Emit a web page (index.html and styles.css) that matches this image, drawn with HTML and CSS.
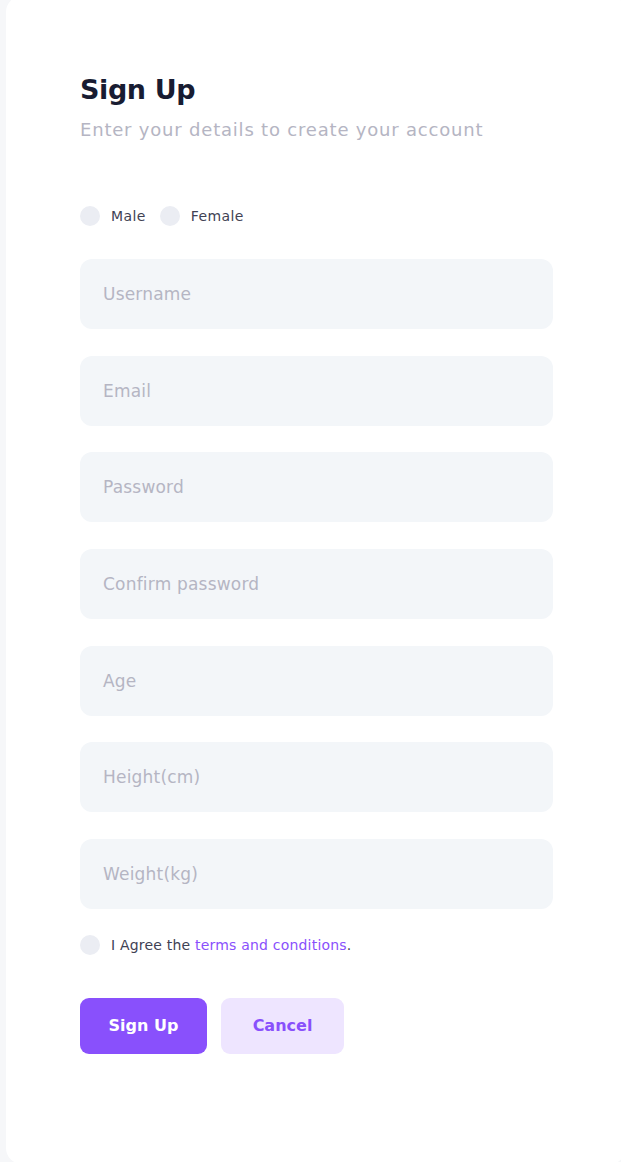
FILE: index.html
```html
<!DOCTYPE html>
<html lang="en">
<head>
<meta charset="utf-8">
<title>Sign Up</title>
<link rel="stylesheet" href="styles.css">
</head>
<body>
<main class="card">
  <form class="form">
    <header class="head">
      <h1 class="title">Sign Up</h1>
      <p class="subtitle">Enter your details to create your account</p>
    </header>
    <div class="radios">
      <label class="radio"><span class="dot"></span>Male</label>
      <label class="radio"><span class="dot"></span>Female</label>
    </div>
    <div class="fields">
      <div class="field">Username</div>
      <div class="field">Email</div>
      <div class="field">Password</div>
      <div class="field">Confirm password</div>
      <div class="field">Age</div>
      <div class="field">Height(cm)</div>
      <div class="field">Weight(kg)</div>
    </div>
    <label class="agree"><span class="dot"></span>I Agree the&nbsp;<a class="link" href="#">terms and conditions</a>.</label>
    <div class="actions">
      <button type="button" class="btn btn-primary">Sign Up</button>
      <button type="button" class="btn btn-light">Cancel</button>
    </div>
  </form>
</main>
</body>
</html>
```

FILE: styles.css
```css
* { box-sizing: border-box; }
html, body { margin: 0; padding: 0; }
body {
  background: #f6f7f9;
  font-family: "DejaVu Sans", "Open Sans", sans-serif;
  height: 1162px;
  overflow: hidden;
}
.card {
  background: #ffffff;
  margin: -4px 0 0 6px;
  width: 620px;
  height: 1168px;
  border-radius: 16px;
  padding: 0 0 0 74px;
}
.form { width: 473px; padding-top: 76px; }
.title {
  margin: 0;
  font-size: 27px;
  line-height: 36px;
  font-weight: 600;
  letter-spacing: -0.4px;
  color: #181c32;
}
.subtitle {
  margin: 10px 0 0;
  font-size: 18px;
  line-height: 24px;
  font-weight: 400;
  letter-spacing: 0.8px;
  color: #b5b5c3;
}
.radios {
  display: flex;
  gap: 14px;
  margin-top: 62px;
  height: 24px;
  align-items: center;
}
.radio, .agree {
  display: flex;
  align-items: center;
  font-size: 14px;
  letter-spacing: 0.4px;
  color: #3f4254;
}
.dot {
  width: 20px;
  height: 20px;
  border-radius: 50%;
  background: #ebedf3;
  margin-right: 11px;
  flex: none;
}
.fields {
  display: flex;
  flex-direction: column;
  gap: 26.67px;
  margin-top: 31px;
}
.field {
  height: 70px;
  border-radius: 12px;
  background: #f3f6f9;
  padding: 0 23px;
  display: flex;
  align-items: center;
  font-size: 17px;
  letter-spacing: 0.2px;
  color: #b5b5c3;
}
.agree { margin-top: 25px; height: 22px; letter-spacing: 0.2px; }
.link { color: #8950fc; text-decoration: none; }
.actions { display: flex; gap: 14px; margin-top: 42px; }
.btn {
  border: 0;
  height: 56px;
  border-radius: 9px;
  font-family: inherit;
  font-size: 16px;
  font-weight: 700;
  padding: 0;
}
.btn-primary { width: 127px; background: #8950fc; color: #ffffff; }
.btn-light { width: 123px; background: #eee5ff; color: #8950fc; }
```
